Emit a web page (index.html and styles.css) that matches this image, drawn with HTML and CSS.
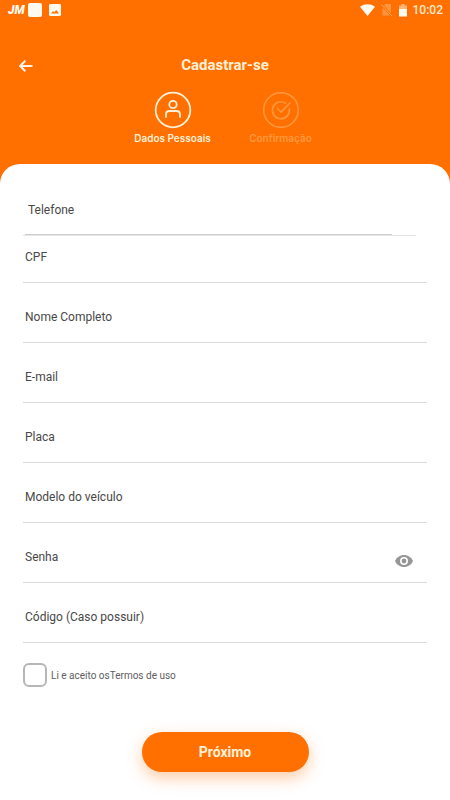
FILE: index.html
```html
<!DOCTYPE html>
<html lang="pt-BR">
<head>
<meta charset="utf-8">
<meta name="viewport" content="width=device-width, initial-scale=1">
<title>Cadastrar-se</title>
<link rel="stylesheet" href="styles.css">
</head>
<body>
<header class="top">
  <div class="status">
    <span class="brand">JM</span>
    <span class="square"></span>
    <svg class="photo" width="12" height="12" viewBox="0 0 12 12" aria-hidden="true"><rect width="12" height="12" rx="1.3" fill="#fffaf0"/><path d="M2 9.5 4 7l1.3 1.5L7.3 6 10 9.5z" fill="#ff7000"/></svg>
    <div class="system">
      <svg width="15" height="12" viewBox="0 0 15 12" aria-hidden="true"><path d="M0 2.7C4.300-.6 10.700-.6 15 2.700L7.500 12z" fill="#fffaf0"/></svg>
      <svg class="nosim" width="12" height="14" viewBox="0 0 12 14" aria-hidden="true"><path d="M4.500 1H10v9L3 2.500zM1.500 4.500 9 12.500H1.500z" fill="#ff9440"/><path d="M.5 1.500 11 13" stroke="#ffa65c"/></svg>
      <svg width="8" height="13" viewBox="0 0 8 13" aria-hidden="true"><path d="M2.500 0h3v1.500H8V5H0V1.500h2.500z" fill="#ffb679"/><path d="M0 5h8v7.500H0z" fill="#fffaf0"/></svg>
      <time>10:02</time>
    </div>
  </div>
  <div class="titlebar">
    <button class="back" type="button" aria-label="Voltar"><svg width="14" height="12" viewBox="0 0 14 12"><path d="M13.500 6H1.500M6.300.8 1.200 6l5.100 5.200" fill="none" stroke="#fff5e5" stroke-width="2"/></svg></button>
    <h1>Cadastrar-se</h1>
  </div>
  <ol class="steps">
    <li class="step">
      <svg width="38" height="38" viewBox="0 0 38 38" fill="none" stroke="#fff0d8" stroke-width="1.800" stroke-linecap="round" aria-hidden="true"><circle cx="19" cy="19" r="17.300"/><circle cx="19" cy="13.500" r="3.700"/><path d="M12 26v-2.500c0-2 1.500-3.500 3.500-3.500h7c2 0 3.500 1.500 3.500 3.500V26"/></svg>
      <span>Dados Pessoais</span>
    </li>
    <li class="step pending">
      <svg width="38" height="38" viewBox="0 0 38 38" fill="none" stroke="#ff983f" stroke-width="1.600" stroke-linecap="round" aria-hidden="true"><circle cx="19" cy="19" r="17.300"/><path d="M23.500 12.200A8.500 8.500 0 1 0 27.300 18M15.500 17.500l3.500 3.500 9-9"/></svg>
      <span>Confirmação</span>
    </li>
  </ol>
</header>
<main class="sheet">
  <form>
    <div class="field phone"><label for="tel">Telefone</label><input id="tel" type="tel"></div>
    <div class="field first"><label for="cpf">CPF</label><input id="cpf" type="text"></div>
    <div class="field"><label for="nome">Nome Completo</label><input id="nome" type="text"></div>
    <div class="field"><label for="email">E-mail</label><input id="email" type="email"></div>
    <div class="field"><label for="placa">Placa</label><input id="placa" type="text"></div>
    <div class="field"><label for="modelo">Modelo do veículo</label><input id="modelo" type="text"></div>
    <div class="field"><label for="senha">Senha</label><input id="senha" type="password">
      <button class="reveal" type="button" aria-label="Mostrar senha"><svg width="18" height="12" viewBox="0 0 18 12"><path d="M9 0C5 0 1.500 2.500 0 6c1.500 3.500 5 6 9 6s7.500-2.500 9-6C16.500 2.500 13 0 9 0z" fill="#969696"/><circle cx="9" cy="6" r="3.200" fill="#969696" stroke="#fff" stroke-width="1.600"/></svg></button></div>
    <div class="field"><label for="codigo">Código (Caso possuir)</label><input id="codigo" type="text"></div>
    <div class="terms"><input id="aceite" type="checkbox"><label for="aceite">Li e aceito os<a href="#termos">Termos de uso</a></label></div>
    <button class="next" type="submit">Próximo</button>
  </form>
</main>
</body>
</html>
```
FILE: styles.css
```css
* {
  box-sizing: border-box;
}

body {
  margin: 0;
  background: #ff7000;
  font-family: Roboto, "Liberation Sans", sans-serif;
  min-height: 100vh;
  display: flex;
  flex-direction: column;
}

button {
  border: 0;
  padding: 0;
  background: none;
  font: inherit;
  cursor: pointer;
}

svg {
  display: block;
}

.status {
  display: flex;
  align-items: center;
  height: 20px;
  padding: 0 7px 0 8px;
  color: #fffaf0;
}

.brand {
  width: 20px;
  font-size: 12px;
  font-style: italic;
  font-weight: 900;
}

.square {
  width: 14px;
  height: 14px;
  border-radius: 2px;
  background: #fffaf0;
}

.photo {
  margin-left: 7px;
}

.system {
  display: flex;
  align-items: center;
  gap: 6px;
  margin-left: auto;
  color: #ffe8c8;
  font-size: 12px;
  font-weight: 500;
}

.titlebar {
  display: grid;
  grid-template-columns: 36px 1fr 36px;
  align-items: center;
  height: 24px;
  margin-top: 33px;
  padding: 0 8px;
}

.back {
  display: grid;
  place-items: center;
  height: 24px;
  padding-top: 2px;
}

h1 {
  margin: 0;
  color: #fff0d8;
  font-size: 15px;
  font-weight: 700;
  line-height: 24px;
  text-align: center;
}

.steps {
  display: flex;
  justify-content: center;
  margin: 0;
  padding: 14px 0 19px 3px;
  list-style: none;
}

.step {
  display: flex;
  flex-direction: column;
  align-items: center;
  width: 108px;
  color: #fff0d8;
  font-family: Inter, Roboto, sans-serif;
  font-size: 10px;
  font-weight: 600;
  line-height: 16px;
}

.step span {
  padding-top: 2px;
  line-height: 14px;
}

.pending {
  color: #ff983f;
}

.sheet {
  flex: 1;
  padding: 25px 23px 28px;
  border-radius: 20px 20px 0 0;
  background: #fff;
}

form {
  display: flex;
  flex-direction: column;
}

.field {
  display: grid;
  align-items: center;
  height: 47px;
  margin-top: 13px;
  border-bottom: 1px solid #dadada;
}

.field > * {
  grid-area: 1 / 1;
}

.field label {
  padding: 0 2px 4px;
  color: #484848;
  font-size: 12px;
  line-height: 16px;
}

.field input {
  width: 100%;
  height: 46px;
  border: 0;
  outline: 0;
  padding: 0 2px;
  background: transparent;
  font: inherit;
}

.field.first {
  margin-top: 0;
}

.field.phone {
  margin: 0 11px 0 0;
  border-color: #e4e4e4;
}

.phone label {
  padding-left: 5px;
}

.phone input {
  width: auto;
  margin: 0 24px 0 2px;
  border-bottom: 1px solid #cfcfcf;
}

.reveal {
  justify-self: end;
  margin-right: 14px;
  padding: 8px 0 4px;
}

.terms {
  display: flex;
  align-items: center;
  gap: 4px;
  margin-top: 20px;
  color: #606060;
  font-size: 10px;
}

.terms input {
  appearance: none;
  width: 24px;
  height: 24px;
  margin: 0;
  border: 2px solid #b6b6b6;
  border-radius: 6px;
}

.terms input:checked {
  background: #ff7000;
}

.terms a {
  color: inherit;
  text-decoration: none;
}

.next {
  align-self: center;
  width: 167px;
  height: 40px;
  margin-top: 45px;
  border-radius: 20px;
  background: #ff7000;
  box-shadow: 0 6px 16px #ff700059;
  color: #fff0d8;
  font-size: 14px;
  font-weight: 700;
}
```
